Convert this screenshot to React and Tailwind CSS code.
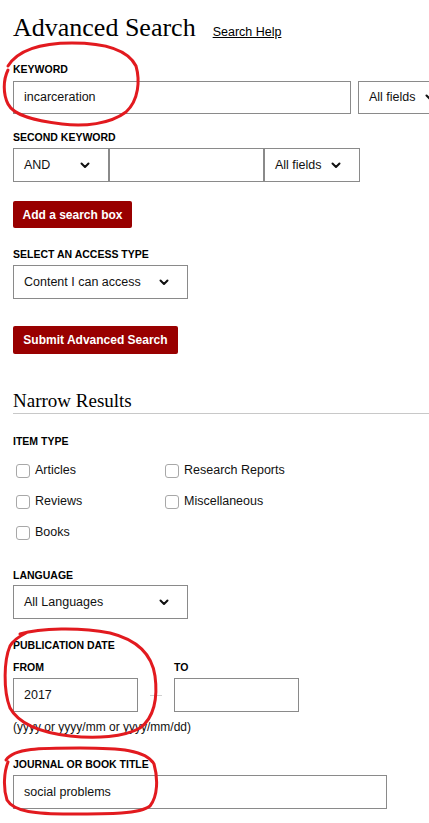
import React from 'react';

const label = "block text-[10.5px] font-bold uppercase leading-[14px] text-black";

function Chevron() {
    return (
        <svg width="10" height="7" viewBox="0 0 10 7" className="shrink-0">
            <path d="M1.5 1.5l3.5 3.5 3.5-3.5" fill="none" stroke="#111" strokeWidth="2" strokeLinecap="round" strokeLinejoin="round" />
        </svg>
    );
}

function Select({ value, className }) {
    return (
        <div className={`${className} border border-[#8a8a8a] bg-white flex items-center justify-between pl-[10px] pr-[18px] text-[12.5px] text-[#111] shrink-0`}>
            <span>{value}</span>
            <Chevron />
        </div>
    );
}

function Input({ value, className }) {
    return (
        <div className={`${className} border border-[#8a8a8a] bg-white flex items-center pl-[10px] text-[12.5px] text-[#111] shrink-0`}>
            {value}
        </div>
    );
}

function Check({ text }) {
    return (
        <div className="h-[31px] flex items-center">
            <span className="ml-[3px] w-[14px] h-[14px] border border-[#a8a8a8] rounded-[3px] bg-white" />
            <span className="ml-[5px] text-[12.5px] text-[#111]">{text}</span>
        </div>
    );
}

function RedMarks() {
    const s = { fill: "none", stroke: "#e21a1f", strokeWidth: 3, strokeLinecap: "round", strokeLinejoin: "round" };
    return (
        <svg className="absolute left-0 top-0 pointer-events-none" width="429" height="823">
            <path {...s} d="M8 66 C18 50 40 43 72 43 C105 43 128 50 136 66 C140 80 139 100 126 112 C110 124 84 127 62 124 C36 121 14 116 8 104 C3 94 3 80 8 70" />
            <path {...s} d="M20 634 C40 628 80 627 110 633 C138 640 152 655 155 676 C158 698 154 718 140 728 C124 737 96 739 70 736 C44 733 20 726 10 708 C3 690 4 660 10 646 C13 640 20 636 26 633" />
            <path {...s} d="M6 760 C14 748 40 748 80 748 C120 748 146 750 154 764 C158 778 158 796 150 806 C140 814 110 814 70 814 C36 814 14 812 7 800 C3 788 4 772 8 762" />
        </svg>
    );
}

export default function App() {
    return (
        <div className="relative w-[429px] h-[823px] overflow-hidden bg-white" style={{ fontFamily: '"Liberation Sans", Arial, sans-serif' }}>
            <div className="pl-[13px]">
                <div className="pt-[12px] flex items-baseline h-[44px]">
                    <h1 className="text-[26px] leading-[32px] text-black" style={{ fontFamily: '"Liberation Serif", serif' }}>Advanced Search</h1>
                    <a href="#" className="ml-[17px] text-[12.5px] underline text-black">Search Help</a>
                </div>

                <span className={`${label} mt-[18px]`}>Keyword</span>
                <div className="mt-[5px] flex gap-[7px]">
                    <Input value="incarceration" className="w-[338px] h-[33px]" />
                    <Select value="All fields" className="w-[96px] h-[33px]" />
                </div>

                <span className={`${label} mt-[16px]`}>Second Keyword</span>
                <div className="mt-[4px] flex">
                    <Select value="AND" className="w-[96px] h-[34px]" />
                    <Input value="" className="w-[155px] h-[34px]" />
                    <Select value="All fields" className="w-[96px] h-[34px]" />
                </div>

                <button className="block mt-[19px] h-[27px] w-[119px] bg-[#990000] text-white text-[12px] font-bold rounded-[2px]">
                    Add a search box
                </button>

                <span className={`${label} mt-[19px]`}>Select an access type</span>
                <Select value="Content I can access" className="mt-[4px] w-[175px] h-[34px]" />

                <button className="block mt-[27px] h-[28px] w-[165px] bg-[#990000] text-white text-[12px] font-bold rounded-[2px]">
                    Submit Advanced Search
                </button>

                <h2 className="mt-[35px] text-[19px] leading-[24px] text-black border-b border-[#c8c8c8]" style={{ fontFamily: '"Liberation Serif", serif' }}>Narrow Results</h2>

                <span className={`${label} mt-[20px]`}>Item Type</span>
                <div className="mt-[7px] grid grid-cols-[149px_auto]">
                    <Check text="Articles" />
                    <Check text="Research Reports" />
                    <Check text="Reviews" />
                    <Check text="Miscellaneous" />
                    <Check text="Books" />
                </div>

                <span className={`${label} mt-[20px]`}>Language</span>
                <Select value="All Languages" className="mt-[3px] w-[175px] h-[34px]" />

                <span className={`${label} mt-[19px]`}>Publication Date</span>
                <div className="mt-[8px] flex items-end">
                    <div>
                        <span className={label}>From</span>
                        <Input value="2017" className="mt-[4px] w-[125px] h-[34px]" />
                    </div>
                    <div className="w-[36px] h-[34px] flex items-center justify-center">
                        <span className="w-[12px] h-px bg-[#d0d0d0]" />
                    </div>
                    <div>
                        <span className={label}>To</span>
                        <Input value="" className="mt-[4px] w-[125px] h-[34px]" />
                    </div>
                </div>
                <p className="mt-[7px] text-[12px] leading-[16px] text-[#111]">(yyyy or yyyy/mm or yyyy/mm/dd)</p>

                <span className={`${label} mt-[22px]`}>Journal or Book Title</span>
                <Input value="social problems" className="mt-[4px] w-[374px] h-[34px]" />
            </div>
            <RedMarks />
        </div>
    );
}
